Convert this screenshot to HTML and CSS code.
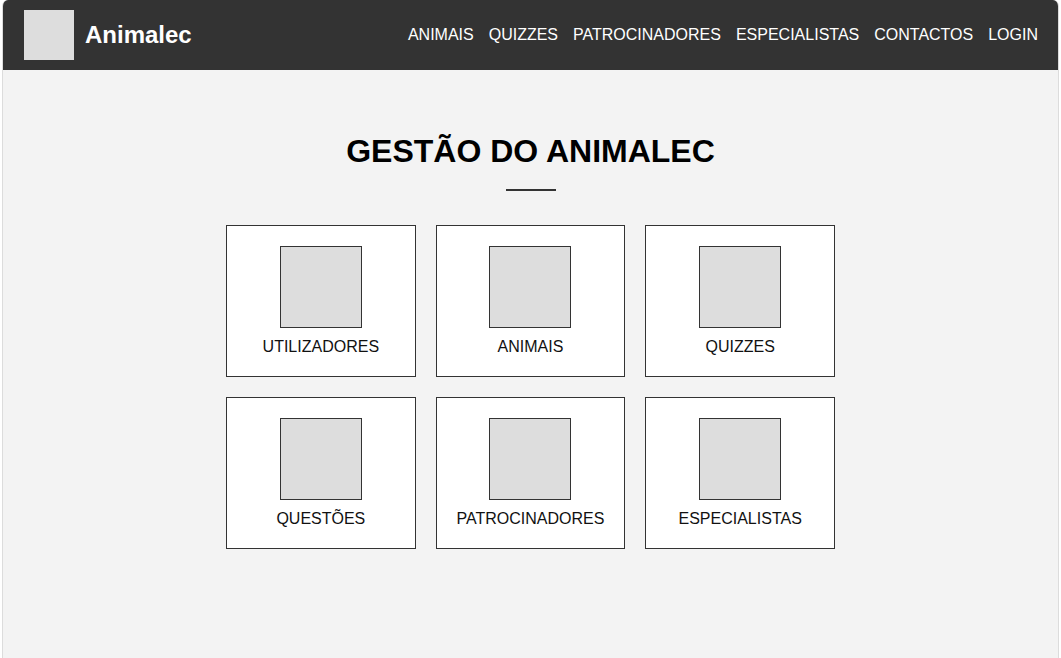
FILE: index.html
```html
<!DOCTYPE html>
<html lang="pt">
<head>
<meta charset="utf-8">
<title>Animalec</title>
<link rel="stylesheet" href="styles.css">
</head>
<body>
<div class="frame">
  <header class="topbar">
    <div class="brand">
      <div class="logo"></div>
      <span class="brand-name">Animalec</span>
    </div>
    <nav class="nav">
      <a href="#">ANIMAIS</a>
      <a href="#">QUIZZES</a>
      <a href="#">PATROCINADORES</a>
      <a href="#">ESPECIALISTAS</a>
      <a href="#">CONTACTOS</a>
      <a href="#">LOGIN</a>
    </nav>
  </header>
  <main class="main">
    <h1 class="title">GESTÃO DO ANIMALEC</h1>
    <div class="rule"></div>
    <div class="grid">
      <a class="card" href="#"><div class="thumb"></div><span class="label">UTILIZADORES</span></a>
      <a class="card" href="#"><div class="thumb"></div><span class="label">ANIMAIS</span></a>
      <a class="card" href="#"><div class="thumb"></div><span class="label">QUIZZES</span></a>
      <a class="card" href="#"><div class="thumb"></div><span class="label">QUESTÕES</span></a>
      <a class="card" href="#"><div class="thumb"></div><span class="label">PATROCINADORES</span></a>
      <a class="card" href="#"><div class="thumb"></div><span class="label">ESPECIALISTAS</span></a>
    </div>
  </main>
</div>
</body>
</html>
```
FILE: styles.css
```css
* { box-sizing: border-box; }
html, body { margin: 0; padding: 0; background: #ffffff; }
body { font-family: "Liberation Sans", Arial, sans-serif; }

.frame {
  margin: 0 2px;
  min-height: 658px;
  background: #f3f3f3;
  border-left: 1px solid #dcdcdc;
  border-right: 1px solid #dcdcdc;
  border-radius: 6px 6px 0 0;
  overflow: hidden;
}

.topbar {
  height: 70px;
  background: #333333;
  display: flex;
  align-items: center;
  justify-content: space-between;
  padding: 0 20px 0 21px;
}

.brand { display: flex; align-items: center; gap: 11px; }
.logo { width: 50px; height: 50px; background: #dddddd; }
.brand-name { color: #ffffff; font-size: 24px; font-weight: bold; }

.nav { display: flex; gap: 15px; }
.nav a { color: #ffffff; text-decoration: none; font-size: 16px; }

.main {
  padding-top: 63px;
  display: flex;
  flex-direction: column;
  align-items: center;
}

.title {
  margin: 0;
  font-size: 32px;
  font-weight: bold;
  color: #000000;
  line-height: 37px;
}

.rule {
  width: 50px;
  height: 2px;
  background: #333333;
  margin-top: 19px;
}

.grid {
  margin-top: 34px;
  width: 609px;
  display: grid;
  grid-template-columns: repeat(3, 1fr);
  gap: 20px 20px;
}

.card {
  display: flex;
  flex-direction: column;
  align-items: center;
  height: 152px;
  padding-top: 20px;
  background: #ffffff;
  border: 1px solid #333333;
  text-decoration: none;
  color: #111111;
}

.thumb {
  width: 82px;
  height: 82px;
  background: #dddddd;
  border: 1px solid #333333;
}

.label {
  margin-top: 9px;
  font-size: 16px;
  line-height: 19px;
}
```
